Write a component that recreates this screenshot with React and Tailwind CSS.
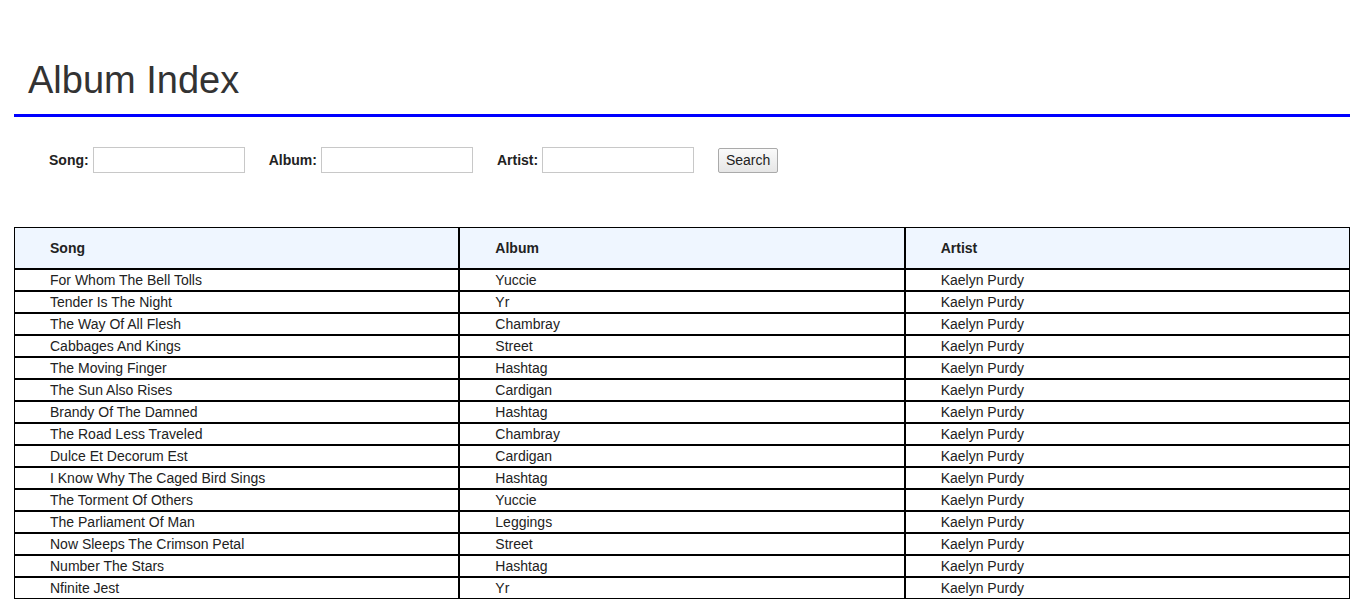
import React from 'react';

const rows = [
  ['For Whom The Bell Tolls', 'Yuccie'],
  ['Tender Is The Night', 'Yr'],
  ['The Way Of All Flesh', 'Chambray'],
  ['Cabbages And Kings', 'Street'],
  ['The Moving Finger', 'Hashtag'],
  ['The Sun Also Rises', 'Cardigan'],
  ['Brandy Of The Damned', 'Hashtag'],
  ['The Road Less Traveled', 'Chambray'],
  ['Dulce Et Decorum Est', 'Cardigan'],
  ['I Know Why The Caged Bird Sings', 'Hashtag'],
  ['The Torment Of Others', 'Yuccie'],
  ['The Parliament Of Man', 'Leggings'],
  ['Now Sleeps The Crimson Petal', 'Street'],
  ['Number The Stars', 'Hashtag'],
  ['Nfinite Jest', 'Yr'],
];

const Field = ({ label }) => (
  <label className="flex items-center gap-[4px]">
    <span className="font-bold text-[14px] text-[#222]">{label}:</span>
    <input type="text" className="w-[152px] h-[26px] border border-[#c8c8c8] bg-white px-1 outline-none" />
  </label>
);

export default function App() {
  return (
    <div className="min-h-screen bg-white text-[#222]" style={{ fontFamily: '"Liberation Sans", Arial, sans-serif' }}>
      <div className="pl-[14px] pr-[13px] pt-[60px]">
        {/* Header */}
        <div className="border-b-[3px] border-[#0000ff] pb-[14px] pl-[14px]">
          <h1 className="text-[38px] leading-[40px] font-normal text-[#333]">Album Index</h1>
        </div>

        {/* Search form */}
        <form className="flex items-center gap-6 pl-[35px] mt-[30px]" onSubmit={(e) => e.preventDefault()}>
          <Field label="Song" />
          <Field label="Album" />
          <Field label="Artist" />
          <button
            type="submit"
            className="h-[25px] w-[60px] border border-[#aaa] rounded-[2px] bg-gradient-to-b from-[#fafafa] to-[#e6e6e6] text-[14px] text-[#222]"
          >
            Search
          </button>
        </form>

        {/* Results */}
        <table className="mt-[54px] w-full table-fixed border-separate border-spacing-0 text-[14px] leading-5">
          <thead>
            <tr className="bg-[#eff6ff]">
              <th className="border border-black text-left font-bold py-[10px] pl-[35px]">Song</th>
              <th className="border border-black text-left font-bold py-[10px] pl-[35px]">Album</th>
              <th className="border border-black text-left font-bold py-[10px] pl-[35px]">Artist</th>
            </tr>
          </thead>
          <tbody>
            {rows.map(([song, album]) => (
              <tr key={song}>
                <td className="border border-black pl-[35px]">{song}</td>
                <td className="border border-black pl-[35px]">{album}</td>
                <td className="border border-black pl-[35px]">Kaelyn Purdy</td>
              </tr>
            ))}
          </tbody>
        </table>
      </div>
    </div>
  );
}
